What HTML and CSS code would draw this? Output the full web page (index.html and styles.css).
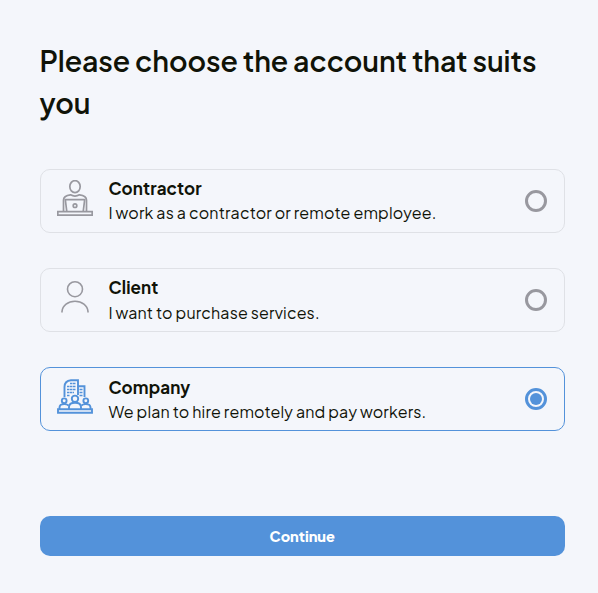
FILE: index.html
```html
<!DOCTYPE html>
<html lang="en">
<head>
<meta charset="utf-8">
<title>Choose account</title>
<link rel="stylesheet" href="styles.css">
</head>
<body>
<main class="page">
  <h1 class="title">Please choose the account that suits you</h1>
  <div class="options">
    <label class="card contractor">
      <svg class="icon" viewBox="0 0 36 36" fill="none" stroke="currentColor" stroke-width="1.7">
        <ellipse cx="18" cy="6.6" rx="5.2" ry="6"/>
        <path d="M6.500 31.500V20c0-3.500 3-4.700 7-5.200 2.500 1.400 6.500 1.400 9 0 4 .5 7 1.700 7 5.200v11.500"/>
        <path d="M9.800 31.500L8.300 19.700h19.400L26.200 31.500"/>
        <circle cx="18" cy="25.700" r="1.800"/>
        <path d="M.800 31.700h34.400v3.500H.800z"/>
      </svg>
      <span class="text"><span class="name">Contractor</span><span class="desc">I work as a contractor or remote employee.</span></span>
      <span class="radio"></span>
    </label>
    <label class="card client">
      <svg class="icon" viewBox="0 0 36 36" fill="none" stroke="currentColor" stroke-width="1.600">
        <circle cx="18" cy="10.200" r="7.500"/>
        <path d="M5 33.500v-1C5.500 26.500 11 22.200 18 22.200s12.500 4.300 13 10.300v1"/>
      </svg>
      <span class="text"><span class="name">Client</span><span class="desc">I want to purchase services.</span></span>
      <span class="radio"></span>
    </label>
    <label class="card selected">
      <svg class="icon" viewBox="0 0 36 36" fill="none" stroke="currentColor" stroke-width="1.900">
        <path d="M7.500 19V9c0-4 2.500-6.500 6.500-6.800h7V17M21 8.200h6.500V19"/>
        <path d="M13 5.500h6M10 8.500h9M10 11.500h9M10 14.500h7M10 17.500h3M22.500 11.500h3.500M22.500 14.500h3.500M22.500 17.500h3.500" stroke-width="1.600" stroke-dasharray="2.500 .5"/>
        <circle cx="18" cy="20.800" r="3.200"/>
        <path d="M12 31v-2c0-3 2.500-4.300 6-4.300s6 1.300 6 4.300v2"/>
        <circle cx="7.200" cy="22.800" r="2.400"/>
        <circle cx="28.800" cy="22.800" r="2.400"/>
        <path d="M2.500 31v-1.500c0-2.300 2-3.400 4.700-3.400 2 0 3.500.5 4.500 1.500M33.500 31v-1.500c0-2.300-2-3.400-4.700-3.400-2 0-3.500.5-4.500 1.500"/>
        <path d="M1 31.200h34v3.500H1z"/>
      </svg>
      <span class="text"><span class="name">Company</span><span class="desc">We plan to hire remotely and pay workers.</span></span>
      <span class="radio"></span>
    </label>
  </div>
  <button class="continue" type="button">Continue</button>
</main>
</body>
</html>
```
FILE: styles.css
```css
* { box-sizing: border-box; }
body {
  margin: 0;
  background: #f4f6fb;
  color: #101308;
  font-family: "Plus Jakarta Sans", Inter, sans-serif;
}
.page { padding: 39px 33px 37px 39.5px; }
.title {
  margin: 0 0 46px;
  font-size: 28.5px;
  font-weight: 600;
  line-height: 42px;
  letter-spacing: -0.09px;
}
.options { display: flex; flex-direction: column; gap: 35px; }
.card {
  display: flex;
  align-items: center;
  height: 64px;
  padding: 0 17px 0 16px;
  border: 1px solid #dfe1e6;
  border-radius: 10px;
}
.selected { border-color: #5392da; }
.icon { width: 36px; height: 36px; margin: -6px 16px 0 0; color: #98989f; }
.selected .icon { color: #5392da; }
.text { display: flex; flex-direction: column; flex: 1; white-space: nowrap; }
.name { font-size: 17px; font-weight: 700; line-height: 25px; letter-spacing: 0.12px; }
.desc { font-size: 16px; font-weight: 400; line-height: 24px; letter-spacing: 0.15px; }
.contractor .text { margin-top: -2px; }
.client .name { line-height: 24px; padding-bottom: 2px; }
.radio {
  display: grid;
  place-items: center;
  width: 22px;
  height: 22px;
  border: 3px solid #98989f;
  border-radius: 50%;
}
.selected .radio { border-color: #5392da; }
.selected .radio::before {
  content: "";
  width: 12px;
  height: 12px;
  border-radius: 50%;
  background: #5392da;
}
.continue {
  display: block;
  width: 100%;
  height: 40px;
  margin-top: 85px;
  padding: 0 0 1px;
  border: 0;
  border-radius: 10px;
  background: #5392da;
  color: #fff;
  font: 800 14.5px/20px "Plus Jakarta Sans", Inter, sans-serif;
}
```
